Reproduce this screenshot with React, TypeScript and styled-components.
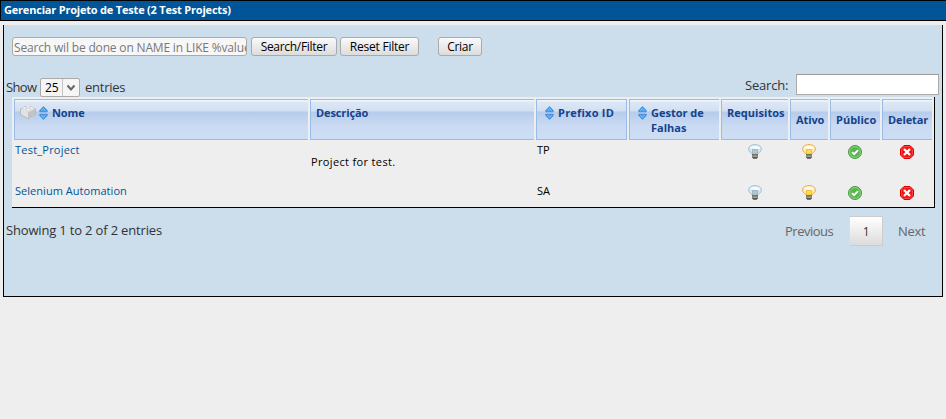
import React from 'react';
import styled, { createGlobalStyle, css } from 'styled-components';

const Global = createGlobalStyle`
  * { box-sizing: border-box; }
  body { margin: 0; background: #eeeeee; font-family: "Open Sans", "Noto Sans", sans-serif; color: #000; }
  input, button { font-family: inherit; }
`;

const Title = styled.h1`
  margin: 0; height: 21px; padding: 0 0 0 3px;
  border: 1px solid #000; border-right: 0;
  background: #005498; color: #fff;
  font-size: 11px; line-height: 18px; font-weight: 700; white-space: nowrap;
  letter-spacing: -0.2px;
`;

const Panel = styled.main`
  margin: 4px 3px 0; height: 272px; padding-top: 12px;
  background: #ccddec; border: 1px solid #000; border-top: 0;
`;

const Filters = styled.form`
  display: flex; height: 19px; margin-left: 8px;
`;

const FilterInput = styled.input`
  width: 235px; height: 19px; padding: 1px 0 0 1px; border: 1px solid #aaa; border-radius: 3px;
  background: #f7f7f7; font-size: 12px; letter-spacing: -0.17px; outline: 0;
  &::placeholder { color: #777; opacity: 1; }
`;

const Button = styled.button<{ $width: number; $gap: number; $spacing?: number }>`
  width: ${p => p.$width}px; height: 19px; margin-left: ${p => p.$gap}px; padding: 1px 0 0;
  border: 1px solid #aaa; border-radius: 3px; background: linear-gradient(#fafafa, #dcdcdc);
  color: #000; font-size: 12px; line-height: 16px; white-space: nowrap;
  letter-spacing: ${p => p.$spacing ?? -0.3}px;
`;

const Controls = styled.div`
  display: flex; justify-content: space-between; height: 41px; padding: 18px 3px 0 3px;
  font-size: 13px; color: #333; white-space: nowrap;
`;

const Length = styled.label`
  display: flex; height: 19px; margin-top: 4px; margin-left: -1px; line-height: 19px; letter-spacing: -0.65px;
  > span:first-child { width: 34px; }
  > span:last-child { margin-left: 5px; letter-spacing: -0.25px; }
`;

const Select = styled.span`
  display: flex; width: 40px; height: 19px; border: 1px solid #aaa; border-radius: 2px;
  background: #f5f5f5; color: #000; line-height: 17px; font-size: 12px; letter-spacing: -0.2px;
  b { width: 22px; padding-left: 4px; font-weight: 400; border-right: 1px solid #c5c5c5; }
  svg { margin: 5px 0 0 3px; }
`;

const TableSearch = styled.label`
  display: flex; line-height: 23px; letter-spacing: -0.2px;
  > span { width: 51px; }
`;

const SearchInput = styled.input`
  width: 143px; height: 21px; border: 1px solid #aaa; border-top-color: #999; background: #fff; padding: 0 2px;
`;

const Table = styled.section`
  width: 923px; height: 111px; margin-left: 8px;
  border-right: 1px solid #000; border-bottom: 1px solid #000; background: #eee;
`;

const columns = css`
  display: grid; grid-template-columns: 294px 224px 91px 90px 67px 38px 50px 50px; column-gap: 2px;
  padding-left: 2px;
`;

const Header = styled.div`
  ${columns}
  height: 43px; padding-top: 2px;
`;

const HeadCell = styled.div<{ $inset: number; $top?: number; $spacing?: number; $closed?: boolean }>`
  display: flex; height: 41px; padding: ${p => p.$top ?? 5}px 0 0 ${p => p.$inset}px;
  border: solid #99bbe8; border-width: 1px ${p => (p.$closed ? 1 : 0)}px 1px 1px;
  background: linear-gradient(#edf4fc 0 1px, #dde8f6 2px, #d0dff2 11px, #b6ccec 12px, #c9daf2 25px, #cddef4);
  color: #15428b; font-size: 11px; line-height: 15px; font-weight: 700; white-space: nowrap;
  letter-spacing: ${p => p.$spacing ?? -0.1}px;
  svg { flex: none; }
`;

const SortSlot = styled.span`
  width: 13px; height: 15px; padding-top: 1px;
`;

const BrickSlot = styled.span`
  width: 19px; height: 18px; margin-top: -1px;
`;

const Row = styled.div<{ $height: number }>`
  ${columns}
  height: ${p => p.$height}px; font-size: 11px; line-height: 15px; white-space: nowrap;
`;

const Cell = styled.div<{ $top?: number; $spacing?: number }>`
  padding: ${p => p.$top ?? 2}px 0 0 1px; letter-spacing: ${p => p.$spacing ?? 0}px;
`;

const ProjectLink = styled.a`
  color: #005498; text-decoration: none;
`;

const IconCell = styled.div<{ $inset: number; $top?: number }>`
  padding: ${p => p.$top ?? 4}px 0 0 ${p => p.$inset}px;
  svg { display: block; }
`;

const Footer = styled.div`
  display: flex; justify-content: space-between; padding: 8px 16px 0 2px;
  font-size: 13px; line-height: 28px; color: #333; white-space: nowrap;
`;

const Info = styled.span`
  letter-spacing: -0.17px;
`;

const Pager = styled.nav`
  display: flex; line-height: 30px; color: #666; letter-spacing: -0.5px;
  > span:first-child { width: 64px; }
  > span:last-child { width: 28px; margin-left: 15px; letter-spacing: -0.3px; }
`;

const Page = styled.span`
  width: 34px; height: 30px; border: 1px solid #ccc; border-left-color: #ddd;
  background: linear-gradient(#fff, #dcdcdc); text-align: center; color: #333; font-size: 12px; line-height: 30px;
`;

const Sort = () => (
  <SortSlot>
    <svg width="9" height="14" viewBox="0 0 9 14">
      <path d="M4.5 .6 8.2 4.4V5.8H.8V4.4Z" fill="#4c9fec" stroke="#2f7ed6" strokeWidth=".7" />
      <path d="M4.5 13.4 8.2 9.6V8.2H.8v1.4Z" fill="#4c9fec" stroke="#2f7ed6" strokeWidth=".7" />
      <path d="M2.7 4.6 4.5 2.6 6.3 4.6M2.7 9.4 4.5 11.4 6.3 9.4" stroke="#83c3fb" fill="none" />
    </svg>
  </SortSlot>
);

const Brick = () => (
  <BrickSlot>
    <svg width="16" height="16" viewBox="0 0 16 16">
      <path d="M.5 5 8 1.5 15.5 5v5.6L8 14.5.5 10.6Z" fill="#e2e2e2" stroke="#b2b2b2" strokeWidth=".8" />
      <path d="M1 5 8 8.3 15 5 8 2Z" fill="#f6f6f6" />
      <path d="M8 8.3v5.9l7-3.7V5Z" fill="#c3c3c3" />
      <g fill="#fafafa" stroke="#c2c2c2" strokeWidth=".5">
        <path d="M6 1.8v1.5c.7.7 3.3.7 4 0V1.8Z" /><ellipse cx="8" cy="1.8" rx="2" ry="1" />
        <path d="M2.4 4v1.4c.7.7 3.3.7 4 0V4Z" /><ellipse cx="4.4" cy="4" rx="2" ry="1" />
        <path d="M9.6 4v1.4c.7.7 3.3.7 4 0V4Z" /><ellipse cx="11.6" cy="4" rx="2" ry="1" />
        <path d="M6 5.8v1.4c.7.7 3.3.7 4 0V5.8Z" /><ellipse cx="8" cy="5.8" rx="2" ry="1" />
      </g>
    </svg>
  </BrickSlot>
);

const Bulb = ({ on }: { on?: boolean }) => (
  <svg width="14" height="15" viewBox="0 0 14 15">
    <path d="M4.2 10C3.7 8.8.6 8 .6 4.9.6 2.3 3.5.6 7 .6s6.4 1.7 6.4 4.3c0 3.1-3.1 3.9-3.6 5.1Z"
      fill={on ? '#fdeeb9' : '#d5e6ef'} stroke={on ? '#eaa74c' : '#9cc3d8'} />
    <path d="M2 5C1.6 2.8 4 1.7 7 1.7S12.4 2.8 12 5C10 3.8 8.500 6 7 5.500S4 4 2 5Z" fill="#fff" opacity=".75" />
    <path d="M4.500 5.500h5v4.500h-5Z" fill={on ? '#ffe044' : '#b3c6d0'} stroke={on ? '#eeb030' : '#93afbd'} strokeWidth=".8" />
    <path d="M4 10h6v3.200L8.800 14.500H5.200L4 13.200Z" fill="#77756a" />
    <path d="M4.500 12.200h5" stroke="#c7c5b5" strokeWidth=".8" />
    <path d="M5 14h4" stroke="#3c3c38" strokeWidth="1" />
  </svg>
);

const Check = () => (
  <svg width="14" height="14" viewBox="0 0 14 14">
    <circle cx="7" cy="7" r="6.5" fill="#58b54d" stroke="#479c43" />
    <circle cx="7" cy="7" r="5.4" fill="none" stroke="#95d587" strokeWidth=".9" />
    <path d="m4 7.1 2.1 2.1 4-4.1" fill="none" stroke="#fff" strokeWidth="2" />
  </svg>
);

const Remove = () => (
  <svg width="14" height="14" viewBox="0 0 14 14">
    <path d="M4 .5h6L13.5 4v6L10 13.5H4L.5 10V4Z" fill="#f51414" stroke="#e00000" />
    <path d="M4.3 1.5h5.4l2.8 2.8v5.4l-2.8 2.8H4.3L1.5 9.7V4.3Z" fill="none" stroke="#ff5555" strokeWidth=".7" />
    <path d="m4 4 6 6m0-6-6 6" stroke="#fff" strokeWidth="2.4" />
  </svg>
);

const projects = [
  { name: 'Test_Project', spacing: 0.22, note: 'Project for test.', prefix: 'TP', height: 41 },
  { name: 'Selenium Automation', spacing: 0.04, note: '', prefix: 'SA', height: 26 },
];

export default function App() {
  return (
    <>
      <Global />
      <Title>Gerenciar Projeto de Teste (2 Test Projects)</Title>
      <Panel>
        <Filters>
          <FilterInput placeholder="Search wil be done on NAME in LIKE %value% mode" />
          <Button type="button" $width={86} $gap={4}>Search/Filter</Button>
          <Button type="button" $width={79} $gap={3} $spacing={-0.22}>Reset Filter</Button>
          <Button type="button" $width={44} $gap={19}>Criar</Button>
        </Filters>
        <Controls>
          <Length>
            <span>Show</span>
            <Select><b>25</b><svg width="10" height="8" viewBox="0 0 10 8"><path d="m1.5 1.5 3.5 4 3.5-4" fill="none" stroke="#666" strokeWidth="2" /></svg></Select>
            <span>entries</span>
          </Length>
          <TableSearch><span>Search:</span><SearchInput /></TableSearch>
        </Controls>
        <Table>
          <Header>
            <HeadCell $inset={5}><Brick /><Sort /><span>Nome</span></HeadCell>
            <HeadCell $inset={5}>Descrição</HeadCell>
            <HeadCell $inset={8} $spacing={0.22} $closed><Sort /><span>Prefixo ID</span></HeadCell>
            <HeadCell $inset={8} $spacing={0}><Sort /><span>Gestor de<br />Falhas</span></HeadCell>
            <HeadCell $inset={5} $spacing={0.04}>Requisitos</HeadCell>
            <HeadCell $inset={5} $top={12}>Ativo</HeadCell>
            <HeadCell $inset={5} $top={12} $spacing={0}>Público</HeadCell>
            <HeadCell $inset={5} $top={12}>Deletar</HeadCell>
          </Header>
          {projects.map(p => (
            <Row key={p.name} $height={p.height}>
              <Cell $spacing={p.spacing}><ProjectLink>{p.name}</ProjectLink></Cell>
              <Cell $top={14} $spacing={0.35}>{p.note}</Cell>
              <Cell>{p.prefix}</Cell>
              <Cell />
              <IconCell $inset={27}><Bulb /></IconCell>
              <IconCell $inset={12}><Bulb on /></IconCell>
              <IconCell $inset={18} $top={5}><Check /></IconCell>
              <IconCell $inset={18} $top={5}><Remove /></IconCell>
            </Row>
          ))}
        </Table>
        <Footer>
          <Info>Showing 1 to 2 of 2 entries</Info>
          <Pager><span>Previous</span><Page>1</Page><span>Next</span></Pager>
        </Footer>
      </Panel>
    </>
  );
}
